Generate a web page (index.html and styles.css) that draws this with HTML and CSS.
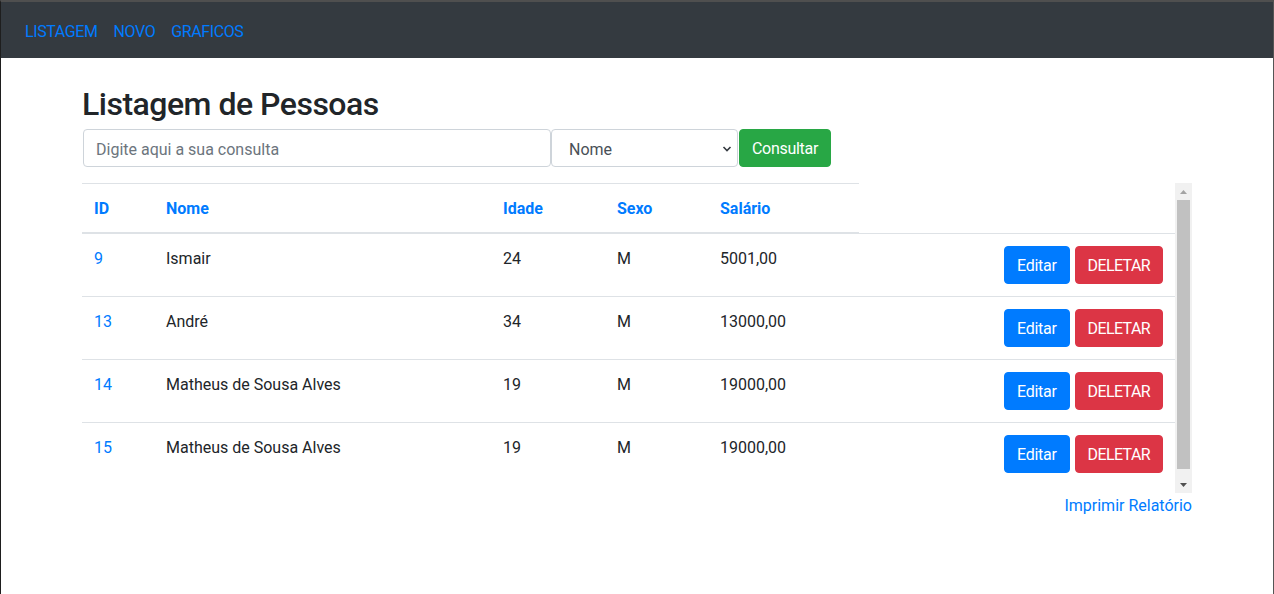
FILE: index.html
```html
<!DOCTYPE html>
<html lang="pt-BR">
<head>
<meta charset="utf-8">
<title>Listagem de Pessoas</title>
<link rel="stylesheet" href="styles.css">
</head>
<body>
<div class="window">
  <nav class="navbar">
    <a class="nav-link" href="#">LISTAGEM</a>
    <a class="nav-link" href="#">NOVO</a>
    <a class="nav-link" href="#">GRAFICOS</a>
  </nav>
  <main class="container">
    <h2 class="title">Listagem de Pessoas</h2>
    <form class="search">
      <input class="field field-query" type="text" placeholder="Digite aqui a sua consulta">
      <div class="select-wrap">
        <select class="field field-select"><option>Nome</option></select>
        <svg class="chev" width="10" height="8" viewBox="0 0 10 8"><path d="M1.5 2 L5 5.5 L8.5 2" fill="none" stroke="#343a40" stroke-width="1.6"/></svg>
      </div>
      <button class="btn btn-success" type="button">Consultar</button>
    </form>
    <div class="scroll-area">
      <div class="scroll-viewport">
        <table class="table">
          <colgroup>
            <col class="c-id"><col class="c-nome"><col class="c-idade"><col class="c-sexo"><col class="c-sal"><col class="c-act">
          </colgroup>
          <thead>
            <tr>
              <th><a href="#">ID</a></th>
              <th><a href="#">Nome</a></th>
              <th><a href="#">Idade</a></th>
              <th><a href="#">Sexo</a></th>
              <th><a href="#">Salário</a></th>
            </tr>
          </thead>
          <tbody>
            <tr>
              <td><a href="#">9</a></td><td>Ismair</td><td>24</td><td>M</td><td>5001,00</td>
              <td class="actions"><div class="btns"><button class="btn btn-primary" type="button">Editar</button><button class="btn btn-danger" type="button">DELETAR</button></div></td>
            </tr>
            <tr>
              <td><a href="#">13</a></td><td>André</td><td>34</td><td>M</td><td>13000,00</td>
              <td class="actions"><div class="btns"><button class="btn btn-primary" type="button">Editar</button><button class="btn btn-danger" type="button">DELETAR</button></div></td>
            </tr>
            <tr>
              <td><a href="#">14</a></td><td>Matheus de Sousa Alves</td><td>19</td><td>M</td><td>19000,00</td>
              <td class="actions"><div class="btns"><button class="btn btn-primary" type="button">Editar</button><button class="btn btn-danger" type="button">DELETAR</button></div></td>
            </tr>
            <tr>
              <td><a href="#">15</a></td><td>Matheus de Sousa Alves</td><td>19</td><td>M</td><td>19000,00</td>
              <td class="actions"><div class="btns"><button class="btn btn-primary" type="button">Editar</button><button class="btn btn-danger" type="button">DELETAR</button></div></td>
            </tr>
          </tbody>
        </table>
      </div>
      <div class="scrollbar">
        <span class="sb-btn"><svg width="7" height="4" viewBox="0 0 7 4"><path d="M0 4 L3.5 0 L7 4 Z" fill="#a3a3a3"/></svg></span>
        <span class="sb-track"><span class="sb-thumb"></span></span>
        <span class="sb-btn"><svg width="7" height="4" viewBox="0 0 7 4"><path d="M0 0 L7 0 L3.5 4 Z" fill="#505050"/></svg></span>
      </div>
    </div>
    <div class="report"><a href="#">Imprimir Relatório</a></div>
  </main>
</div>
</body>
</html>
```
FILE: styles.css
```css
* { box-sizing: border-box; }
html, body { margin: 0; padding: 0; }
body {
  font-family: Roboto, "Noto Sans", "Liberation Sans", sans-serif;
  font-size: 16px;
  line-height: 1.5;
  color: #212529;
  background: #fff;
}
a { color: #007bff; text-decoration: none; }
.window {
  height: 594px;
  border-top: 2px solid #4f4f4f;
  border-left: 1px solid #1e1e1e;
  border-right: 1px solid #555;
  overflow: hidden;
}
.navbar {
  background: #343a40;
  height: 56px;
  padding: 8px 16px;
  display: flex;
  align-items: center;
}
.nav-link {
  padding: 10px 8px 6px;
  line-height: 24px;
  letter-spacing: -0.4px;
}
.container {
  max-width: 1140px;
  margin: 24px auto 0;
  padding: 0 15px;
}
.title {
  margin: 0 0 6px;
  padding-top: 3px;
  font-size: 32px;
  font-weight: 500;
  line-height: 38px;
  letter-spacing: -0.5px;
}
.search {
  display: flex;
  align-items: center;
  margin: 0 0 16px 1px;
}
.field {
  height: 38px;
  padding: 7px 12px 5px;
  font: inherit;
  font-size: 16px;
  line-height: 1.5;
  color: #495057;
  background: #fff;
  border: 1px solid #ced4da;
  border-radius: 4px;
}
.field::placeholder { color: #6c757d; }
.field-query { width: 468px; }
.select-wrap { position: relative; }
.field-select {
  width: 187px;
  appearance: none;
  -webkit-appearance: none;
  padding-left: 17px;
  padding-top: 8px;
  padding-bottom: 4px;
}
.chev {
  position: absolute;
  right: 6px;
  top: 16px;
  pointer-events: none;
}
.btn {
  height: 38px;
  padding: 7px 12px 5px;
  font: inherit;
  font-size: 16px;
  line-height: 1.5;
  color: #fff;
  border: 1px solid transparent;
  border-radius: 4px;
}
.btn-success {
  background: #28a745;
  border-color: #28a745;
  margin-left: 1px;
  letter-spacing: -0.3px;
}
.btn-primary { background: #007bff; border-color: #007bff; letter-spacing: -0.3px; }
.btn-danger { background: #dc3545; border-color: #dc3545; letter-spacing: -0.6px; }
.scroll-area {
  display: flex;
  height: 310px;
}
.scroll-viewport {
  flex: 1;
  overflow: hidden;
}
.table {
  width: 100%;
  border-collapse: collapse;
  table-layout: fixed;
}
.c-id { width: 72px; }
.c-nome { width: 337px; }
.c-idade { width: 114px; }
.c-sexo { width: 103px; }
.c-sal { width: 151px; }
.table th, .table td {
  padding: 13px 12px 11px;
  text-align: left;
  vertical-align: top;
  border-top: 1px solid #dee2e6;
}
.table td.actions { padding-top: 12px; padding-bottom: 12px; }
.table th {
  font-weight: 700;
  border-bottom: 2px solid #dee2e6;
}
.table td.actions { text-align: right; }
.btns {
  display: flex;
  justify-content: flex-end;
  gap: 5px;
}
.scrollbar {
  width: 17px;
  background: #f1f1f1;
  display: flex;
  flex-direction: column;
}
.sb-btn {
  height: 17px;
  display: flex;
  align-items: center;
  justify-content: center;
}
.sb-track {
  flex: 1;
  padding: 0 2px;
}
.sb-thumb {
  display: block;
  height: 269px;
  background: #c1c1c1;
}
.report {
  text-align: right;
  line-height: 24px;
  padding-top: 1px;
}
```
